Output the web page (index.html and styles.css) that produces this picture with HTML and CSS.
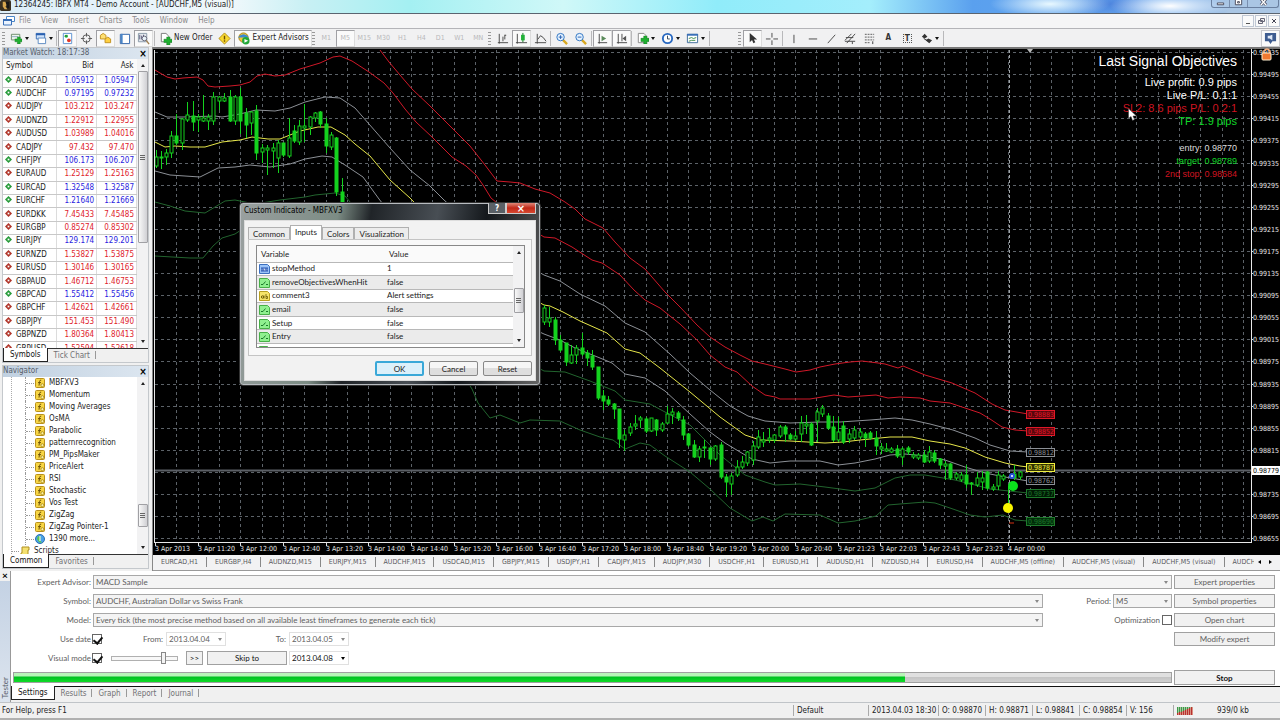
FILE: index.html
```html
<!DOCTYPE html>
<html lang="en">
<head>
    <meta charset="UTF-8">
    <meta name="viewport" content="width=device-width, initial-scale=1.0">
    <title>12364245: IBFX MT4 - Demo Account - [AUDCHF,M5 (visual)]</title>
    <link rel="stylesheet" href="styles.css">
</head>
<body>
    <svg class="defs" aria-hidden="true">
        <symbol id="i-fx" viewBox="0 0 10 10"><rect x=".5" y=".5" width="9" height="9" rx="1" fill="#f7d544" stroke="#b8901c"/><path d="M6.2 2.2Q4.8 1.8 4.6 3.4L4 7.6M3 4.6h3" fill="none" stroke="#6d5208"/><circle cx="7.4" cy="7.2" r="1.5" fill="#fff3a0" stroke="#9c7a10" stroke-width=".7"/></symbol>
        <symbol id="i-bool" viewBox="0 0 11 10"><path d="M.5.5h8l2 2v7H.5z" fill="#8ff08f" stroke="#48b048"/><path d="M2 6.5h2l2.5-3M7 6.5h2" fill="none" stroke="#1c7a2c"/></symbol>
        <symbol id="i-int" viewBox="0 0 11 10"><path d="M.5.5h8l2 2v7H.5z" fill="#9cc4f8" stroke="#3c70c0"/><path d="M2 3.5h7v4H2z" fill="#2454b4"/><path d="M3 4.5v2M5 6.500v-2l1 2v-2M8 4.500v2" stroke="#fff" stroke-width=".6" fill="none"/></symbol>
        <symbol id="i-str" viewBox="0 0 11 10"><path d="M.5.5h8l2 2v7H.5z" fill="#f6e468" stroke="#b8a020"/><circle cx="3.6" cy="6" r="1.200" fill="none" stroke="#6a5800"/><path d="M5 4.500v3M7 3v4.500h1.500v-2H7" fill="none" stroke="#6a5800" stroke-width=".8"/></symbol>
        <symbol id="i-plus" viewBox="0 0 8 8"><path d="M3 0h3v2.500h2v3H6V8H3V5.500H0v-3h3z" fill="#1fb030" stroke="#0c7018" stroke-width=".5"/></symbol>
    </svg>

    <header class="titlebar">
        <svg class="app-icon" viewBox="0 0 12 12"><rect width="12" height="12" rx="2" fill="#3a3020"/><path d="M3 2h3l2 3-2 2 2 3H5L3 7z" fill="#d8a850"/><path d="M6 2h4v7H8z" fill="#181818"/></svg>
        <h1>12364245: IBFX MT4 - Demo Account - [AUDCHF,M5 (visual)]</h1>
        <div class="win-buttons">
            <button aria-label="Minimize"><svg viewBox="0 0 10 10"><path d="M1.500 5.500h7v2h-7z" fill="#fff" stroke="#445"/></svg></button>
            <button aria-label="Restore"><svg viewBox="0 0 10 10"><path d="M1.500 1.500h7v6h-7zM4 4h2v1.500H4z" fill="#fff" stroke="#445"/></svg></button>
            <button aria-label="Close" class="wide"><svg viewBox="0 0 10 10"><path d="M2 1l6 7M8 1L2 8" stroke="#445" stroke-width="3"/><path d="M2 1l6 7M8 1L2 8" stroke="#fff" stroke-width="1.500"/></svg></button>
        </div>
    </header>

    <nav class="menubar">
        <svg class="menu-icon" viewBox="0 0 12 10"><path d="M3.500.5h8v5h-8z" fill="#fff" stroke="#4a86c8"/><path d="M.5 3.500h8v5.500h-8z" fill="#eaf3ff" stroke="#3a70b8"/><path d="M0 4h9" stroke="#3a70b8" stroke-width="2"/></svg>
        <a href="#">File</a><a href="#">View</a><a href="#">Insert</a><a href="#">Charts</a><a href="#">Tools</a><a href="#">Window</a><a href="#">Help</a>
        <div class="mdi-buttons">
            <button aria-label="Minimize chart"><svg viewBox="0 0 10 10"><path d="M3 7.500h4" stroke="#555"/></svg></button>
            <button aria-label="Restore chart"><svg viewBox="0 0 10 10"><path d="M4.500 2.500h4v3h-4zM2.500 4.500h4v3h-4z" fill="#eee" stroke="#667"/></svg></button>
            <button aria-label="Close chart"><svg viewBox="0 0 10 10"><path d="M3 3l4 4M7 3L3 7" stroke="#445"/></svg></button>
        </div>
    </nav>

    <div class="toolbar">
        <i class="grip"></i>
        <button class="tool drop first" aria-label="New chart"><svg viewBox="0 0 14 14"><path d="M1.500 2.500h9v6h-9z" fill="#eef6ee" stroke="#6a8a6a"/><path d="M2 5h7" stroke="#8ab"/><use href="#i-plus" x="5" y="5" width="8" height="8"/></svg></button>
        <button class="tool drop first" aria-label="Profiles"><svg viewBox="0 0 14 14"><path d="M2.500 1.500h9v6h-9z" fill="#cfe2fa" stroke="#3a70b8"/><path d="M4.500 6.500h8v6h-8z" fill="#fff" stroke="#5a88c0"/><path d="M2 2.500h10" stroke="#2a60b0" stroke-width="2"/></svg></button>
        <i class="sep"></i>
        <button class="tool on" aria-label="Market watch"><svg viewBox="0 0 14 14"><path d="M2.500 1.500h9v11h-9z" fill="#fff" stroke="#5a90d0"/><path d="M4 4l3-1v3z" fill="#1a9a30"/><circle cx="5.500" cy="4.500" r="1.600" fill="#20a038"/><circle cx="8.500" cy="9" r="2" fill="#e03828"/></svg></button>
        <button class="tool" aria-label="Data window"><svg viewBox="0 0 14 14"><circle cx="7" cy="7" r="4" fill="none" stroke="#555"/><path d="M7 1v4M7 9v4M1 7h4M9 7h4" stroke="#555"/></svg></button>
        <button class="tool on" aria-label="Navigator"><svg viewBox="0 0 14 14"><path d="M1.500 3.500l3-2 3 2v4h-6z" fill="#ffe070" stroke="#c09020"/><path d="M6.500 7.500l3-2 3 2v4h-6z" fill="#ffd040" stroke="#c09020"/></svg></button>
        <button class="tool" aria-label="Terminal"><svg viewBox="0 0 14 14"><path d="M2.500 2.500h10v10h-10z" fill="#fff" stroke="#2a60a8"/><path d="M4 2v10" stroke="#4a86c8" stroke-width="2"/></svg></button>
        <button class="tool on" aria-label="Strategy tester"><svg viewBox="0 0 14 14"><path d="M1.500 1.500h9v9h-9z" fill="#e4e8ee" stroke="#8898a8"/><path d="M3 3v5M5 4v4M7 3v5" stroke="#557"/><circle cx="8" cy="7" r="2.500" fill="#e8f2fa" stroke="#667"/><path d="M10 9l3 4" stroke="#a08050" stroke-width="1.500"/></svg></button>
        <i class="sep"></i>
        <button class="tool text"><svg viewBox="0 0 14 14"><path d="M2.500 1.500h5l3 3v6h-8z" fill="#fff" stroke="#777"/><use href="#i-plus" x="5" y="5" width="9" height="9"/></svg>New Order</button>
        <button class="tool" aria-label="Metaeditor"><svg viewBox="0 0 14 14"><path d="M7 1l6 6-6 6-6-6z" fill="#f8d830" stroke="#b08a10"/><path d="M7 4v4M7 9v1.500" stroke="#705000" stroke-width="1.500"/></svg></button>
        <button class="tool text on"><svg viewBox="0 0 14 14"><circle cx="7" cy="6" r="5" fill="#f0c838" stroke="#a88010"/><path d="M1 6q6-7 12 0z" fill="#3a88d0"/><circle cx="9.500" cy="9.500" r="4" fill="#22a838"/><path d="M8 7.500l4 2-4 2z" fill="#fff"/></svg>Expert Advisors</button>
        <i class="grip"></i>
        <button class="tool tf" disabled>M1</button><button class="tool tf on" disabled>M5</button><button class="tool tf" disabled>M15</button><button class="tool tf" disabled>M30</button><button class="tool tf" disabled>H1</button><button class="tool tf" disabled>H4</button><button class="tool tf" disabled>D1</button><button class="tool tf" disabled>W1</button><button class="tool tf" disabled>MN</button>
        <i class="grip"></i>
        <button class="tool" aria-label="Bar chart"><svg viewBox="0 0 14 14"><path d="M3.500 2v10.500M2 11.500h11M7.500 5v5M9.500 3v5M9.500 3.500H11" fill="none" stroke="#444"/></svg></button>
        <button class="tool on" aria-label="Candlesticks"><svg viewBox="0 0 14 14"><path d="M2.500 2v10.500M1 11.500h12" stroke="#444"/><path d="M8.500 1v10" stroke="#0a7018"/><path d="M6.500 3h4v6h-4z" fill="#22b038"/></svg></button>
        <button class="tool" aria-label="Line chart"><svg viewBox="0 0 14 14"><path d="M3.500 2v10.500M1 11.500h12M4 8l3-4 3 2 3 4" fill="none" stroke="#444"/></svg></button>
        <i class="sep thin"></i>
        <button class="tool" aria-label="Zoom in"><svg viewBox="0 0 14 14"><path d="M8 8l5 5" stroke="#d8a820" stroke-width="2.500"/><circle cx="6" cy="5.500" r="4" fill="#e4f2ff" stroke="#2a70c0"/><path d="M4 5.500h4M6 3.500v4" stroke="#2a60b0"/></svg></button>
        <button class="tool" aria-label="Zoom out"><svg viewBox="0 0 14 14"><path d="M8 8l5 5" stroke="#d8a820" stroke-width="2.500"/><circle cx="6" cy="5.500" r="4" fill="#e4f2ff" stroke="#2a70c0"/><path d="M4 5.500h4" stroke="#2a60b0"/></svg></button>
        <i class="sep"></i>
        <button class="tool on" aria-label="Auto scroll"><svg viewBox="0 0 14 14"><path d="M3.500 2v10.500M2 11.500h10" stroke="#444"/><path d="M6 4l5 3-5 3z" fill="#5a8a5a"/></svg></button>
        <button class="tool on" aria-label="Chart shift"><svg viewBox="0 0 14 14"><path d="M3.500 2v10.500M2 11.500h11M7.500 2v8" stroke="#444"/><path d="M12 4L8 7l4 3z" fill="#555"/></svg></button>
        <i class="sep thin"></i>
        <button class="tool drop" aria-label="Indicators"><svg viewBox="0 0 14 14"><path d="M2.500 1.500h6l2 2v8h-8z" fill="#fff" stroke="#888"/><use href="#i-plus" x="5" y="4" width="9" height="9"/></svg></button>
        <button class="tool drop" aria-label="Periods"><svg viewBox="0 0 14 14"><circle cx="7" cy="7" r="5" fill="#fff" stroke="#2868c0" stroke-width="2"/><path d="M7 4v3.500h2.500" fill="none" stroke="#345"/></svg></button>
        <button class="tool drop" aria-label="Templates"><svg viewBox="0 0 14 14"><path d="M1.500 2.500h11v9h-11z" fill="#fff" stroke="#3a6898"/><path d="M1 3h12" stroke="#3a70b8" stroke-width="2"/><path d="M3 7l3-1 2 1 3-1M3 10l3-1h4" fill="none" stroke="#3a8a48"/></svg></button>
        <i class="sep"></i>
        <i class="grip far"></i>
        <button class="tool on" aria-label="Cursor"><svg viewBox="0 0 14 14"><path d="M4 1v10l2.500-2.500L8 12l2-1-1.500-3H12z" fill="#333"/></svg></button>
        <button class="tool" aria-label="Crosshair"><svg viewBox="0 0 14 14"><path d="M7.500 1v5M7.500 9v5M1 7.500h5M9 7.500h5" stroke="#444"/></svg></button>
        <i class="sep"></i>
        <button class="tool" aria-label="Vertical line"><svg viewBox="0 0 14 14"><path d="M7.500 3v9" stroke="#444"/></svg></button>
        <button class="tool" aria-label="Horizontal line"><svg viewBox="0 0 14 14"><path d="M3 7.500h9" stroke="#444"/></svg></button>
        <button class="tool" aria-label="Trendline"><svg viewBox="0 0 14 14"><path d="M3 12l8-9" stroke="#444"/></svg></button>
        <button class="tool" aria-label="Equidistant channel"><svg viewBox="0 0 14 14"><path d="M1 9l7-7M3 12l9-10M2 6h8M1 10h8" stroke="#444"/><path d="M9 13v-3h3" fill="none" stroke="#444"/></svg></button>
        <button class="tool" aria-label="Fibonacci"><svg viewBox="0 0 14 14"><path d="M2 2.500h10M2 5.500h10M2 8.500h10M2 11.500h6" stroke="#555" stroke-dasharray="2 1"/><path d="M10.500 10v3" stroke="#333"/></svg></button>
        <button class="tool letter" aria-label="Text">A</button>
        <button class="tool letter" aria-label="Text label"><span class="boxed">T</span></button>
        <button class="tool drop" aria-label="Arrows"><svg viewBox="0 0 14 14"><path d="M2 5l3-3 3 3-3 2zM6 9l3-2 4 2-3 3z" fill="#333"/><path d="M4 7l5 3" stroke="#333"/></svg></button>
        <i class="sep"></i>
        <button class="tool chat" aria-label="Community"><svg viewBox="0 0 14 14"><path d="M1 1h12v9H9l-2 3-2-3H1z" fill="#3e5c90"/><path d="M4 4v3h2l3 2V3L6 4z" fill="#dfe8f6"/></svg></button>
    </div>

    <main class="workspace">
        <aside class="side">
            <section class="panel market">
                <h2>Market Watch: 18:17:38<button aria-label="Close">×</button></h2>
                <div class="scroll-area">
                    <table>
                        <thead><tr><th>Symbol</th><th>Bid</th><th>Ask</th></tr></thead>
                        <tbody id="quotes"></tbody>
                    </table>
                    <div class="bar"><i class="up"></i><b class="thumb"></b><i class="down"></i></div>
                </div>
                <div class="tabs"><button class="active">Symbols</button><button>Tick Chart</button></div>
            </section>
            <section class="panel navigator">
                <h2>Navigator<button aria-label="Close">×</button></h2>
                <div class="scroll-area">
                    <ul id="indicators">
                        <li>MBFXV3</li>
                        <li>Momentum</li>
                        <li>Moving Averages</li>
                        <li>OsMA</li>
                        <li>Parabolic</li>
                        <li>patternrecognition</li>
                        <li>PM_PipsMaker</li>
                        <li>PriceAlert</li>
                        <li>RSI</li>
                        <li>Stochastic</li>
                        <li>Vos Test</li>
                        <li>ZigZag</li>
                        <li>ZigZag Pointer-1</li>
                        <li class="more">1390 more...</li>
                        <li class="folder">Scripts</li>
                    </ul>
                    <div class="bar low"><i class="up"></i><b class="thumb"></b><i class="down"></i></div>
                </div>
                <div class="tabs"><button class="active">Common</button><button>Favorites</button></div>
            </section>
        </aside>

        <section class="chart-col">
            <div class="chart">
                <svg id="chart" viewBox="153 47 1127 508" role="img" aria-label="AUDCHF M5 chart">
                    <rect x="153" y="47" width="1127" height="508" fill="#000"/>
                    <path d="M153 48h1127" stroke="#777" stroke-width="2"/>
                    <g id="grid"></g>
                    <path d="M154 470.500h1097" stroke="#5c6066" stroke-width="2"/>
                    <g fill="none" stroke-width="1">
                        <g stroke="#d01828">
                            <polyline points="155,70 160,73 167,77 175,79 183,78 197,77 203,80 208,86 215,87 230,86 240,85 250,82 257,76 265,74 275,76 285,75 300,69 320,63 333,57 340,56 352,61 369,72 384,83 393,93 405,109 416,122 432,137 452,157 466,166 476,175 483,185 491,198 520,222 544,237 555,238 572,247 592,260 602,263 620,275 634,290 645,300 660,308 680,324 697,340 710,355 725,367 737,372 752,386 765,395 775,397 780,399 810,399 834,395 848,397 876,395 888,398 900,397 920,398 930,401 950,403 965,408 980,413 990,419 1002,427 1015,430 1028,431"/>
                            <polyline points="380,50 389,62 400,75 412,89 430,106 450,126 470,146 485,165 497,181 510,182 520,183 535,189 550,193 565,202 575,209 585,219 603,228 615,242 630,258 645,269 665,292 680,307 697,325 710,337 725,347 740,355 752,361 765,364 785,369 796,372 810,370 820,367 835,364 850,362 862,361 878,363 885,364 898,368 903,366 925,375 952,383 975,393 992,404 1005,410 1028,414"/>
                        </g>
                        <g stroke="#8c9096">
                            <polyline points="155,112 167,117 183,117 215,116 222,117 240,114 256,110 275,111 290,108 305,102 325,97 340,98 355,108 369,124 390,148 410,170 430,186 444,200 500,250 544,275 560,281 580,294 605,306 625,323 645,332 670,354 690,373 710,390 730,406 748,416 765,421 790,423 820,422 840,422 870,420 895,418 912,420 930,424 953,430 975,438 990,445 1010,451 1028,452"/>
                            <polyline points="155,171 170,175 200,177 218,168 235,167 250,165 270,167 290,164 305,159 322,156 332,157 345,165 363,177 379,199 450,290 544,334 560,340 575,348 600,358 612,363 625,374 645,378 665,391 690,414 710,432 725,443 740,452 752,459 770,463 790,461 820,461 838,465 855,463 875,459 890,455 905,454 925,456 945,460 965,467 985,473 1005,477 1028,481"/>
                        </g>
                        <polyline stroke="#e6e64a" points="155,142 165,147 175,146 190,147 205,147 222,142 240,140 252,137 268,139 280,139 300,131 318,127 331,127 345,135 355,144 370,156 390,180 410,198 480,270 544,305 550,306 563,312 580,321 607,333 625,349 640,353 660,368 690,392 720,417 745,435 760,440 790,441 825,443 843,442 860,440 880,438 890,437 912,437 930,441 950,444 965,448 985,457 1005,463 1020,466 1028,467"/>
                        <g stroke="#22642e">
                            <polyline points="155,202 170,206 185,211 205,213 225,201 235,200 255,204 280,200 305,197 315,195 335,193 345,196 450,320 544,371 565,372 590,381 615,391 625,400 650,404 665,412 690,425 720,455 745,475 765,482 775,485 800,484 825,487 855,491 875,488 895,478 910,475 925,475 955,480 975,485 990,489 1028,493"/>
                            <polyline points="155,256 190,258 203,258 213,246 222,238 235,234 241,230 340,260 440,340 472,389 478,403 490,418 500,415 520,423 530,420 560,421 580,430 600,437 613,440 625,449 640,443 650,445 665,456 690,472 710,489 730,508 752,521 763,517 773,521 785,514 820,515 838,523 855,521 876,516 888,505 900,504 925,502 935,503 950,508 970,515 985,517 1003,515 1015,520 1028,521"/>
                        </g>
                    </g>
                    <g id="candles" stroke="#14d21e"></g>
                    <path d="M1009.500 50v492" stroke="#a0a4a8" stroke-dasharray="3 2"/>
                    <g id="levels"></g>
                    <path d="M1008.500 486v22" stroke="#14d21e"/>
                    <circle cx="1012" cy="476" r="2" fill="#fff" stroke="#2a50d8" stroke-width="2"/>
                    <circle cx="1013" cy="486" r="5" fill="#0be41c"/>
                    <circle cx="1008" cy="508" r="5" fill="#f8f400"/>
                    <path d="M1009 523h5" stroke="#d03010"/>
                    <path d="M154.500 50v492M154 542.500h1097.500M1251.500 49v494" fill="none" stroke="#e8e8e8"/>
                    <path d="M1027 49h6l-3 4z" fill="#bbb"/>
                    <g id="axes" class="axis"></g>
                    <path d="M1264 53v-2q3-4 6 0v2" fill="none" stroke="#f8b080" stroke-width="1.500"/>
                    <rect x="1262" y="53" width="9" height="7" rx="1" fill="#f07830" stroke="#fff0d0"/>
                </svg>
                <div class="signal">
                    <strong>Last Signal Objectives</strong>
                    <p>Live profit: 0.9 pips</p>
                    <p>Live P/L: 0.1:1</p>
                    <p class="stop">SL2: 8.6 pips P/L: 0.2:1</p>
                    <p class="target">TP: 1.9 pips</p>
                    <small>entry: 0.98770</small>
                    <small class="target">target: 0.98789</small>
                    <small class="stop">2nd stop: 0.98684</small>
                </div>
                <svg class="pointer" viewBox="0 0 9 13"><path d="M.5.5v10l2.500-2 1.500 4 2-1-1.500-3.500h3.500z" fill="#fff" stroke="#333" stroke-width=".5"/></svg>
            </div>
            <div class="chart-tabs">
                <div class="strip">
                    <button>EURCAD,H1</button><button>EURGBP,H4</button><button>AUDNZD,M15</button><button>EURJPY,M15</button><button>AUDCHF,M15</button><button>USDCAD,M15</button><button>GBPJPY,M15</button><button>USDJPY,H1</button><button>CADJPY,M15</button><button>AUDJPY,M30</button><button>USDCHF,H1</button><button>EURUSD,H1</button><button>AUDUSD,H1</button><button>NZDUSD,H4</button><button>EURUSD,H4</button><button>AUDCHF,M5 (offline)</button><button>AUDCHF,M5 (visual)</button><button>AUDCHF,M5 (visual)</button><button>AUDCHF</button>
                </div>
                <button class="arrow" aria-label="Scroll left"><i class="left"></i></button>
                <button class="arrow" aria-label="Scroll right"><i class="right"></i></button>
            </div>
        </section>
    </main>

    <section class="tester">
        <div class="tester-side"><button aria-label="Close tester">×</button><span>Tester</span></div>
        <div class="tester-main">
            <div class="form">
                <div class="line">
                    <label class="name" for="expert">Expert Advisor:</label>
                    <span class="combo grow"><select id="expert" disabled><option>MACD Sample</option></select></span>
                    <button class="side-btn dim">Expert properties</button>
                </div>
                <div class="line">
                    <label class="name" for="symbol">Symbol:</label>
                    <span class="combo grow"><select id="symbol" disabled><option>AUDCHF, Australian Dollar vs Swiss Frank</option></select></span>
                    <span class="extra"><label for="period">Period:</label><span class="combo period"><select id="period" disabled><option>M5</option></select></span></span>
                    <button class="side-btn dim">Symbol properties</button>
                </div>
                <div class="line">
                    <label class="name" for="model">Model:</label>
                    <span class="combo grow"><select id="model" disabled><option>Every tick (the most precise method based on all available least timeframes to generate each tick)</option></select></span>
                    <span class="extra"><label for="opt">Optimization</label><input type="checkbox" id="opt" disabled></span>
                    <button class="side-btn dim">Open chart</button>
                </div>
                <div class="line">
                    <label class="name" for="usedate">Use date</label>
                    <input type="checkbox" id="usedate" checked>
                    <label class="date-name from" for="from">From:</label>
                    <span class="combo date"><select id="from" disabled><option>2013.04.04</option></select></span>
                    <label class="date-name" for="to">To:</label>
                    <span class="combo date"><select id="to" disabled><option>2013.04.05</option></select></span>
                    <button class="side-btn dim last">Modify expert</button>
                </div>
                <div class="line">
                    <label class="name" for="visual">Visual mode</label>
                    <input type="checkbox" id="visual" checked>
                    <input type="range" class="speed" aria-label="Speed" min="0" max="32" value="26">
                    <button class="small-btn">&gt;&gt;</button>
                    <button class="skip-btn">Skip to</button>
                    <span class="combo date live"><select aria-label="Skip to date"><option>2013.04.08</option></select></span>
                </div>
            </div>
            <div class="run">
                <div class="progress" role="progressbar" aria-label="Test progress" aria-valuenow="77"><div style="width: 77%"></div></div>
                <button class="side-btn stop-btn">Stop</button>
            </div>
            <div class="tabs"><button class="active">Settings</button><button>Results</button><button>Graph</button><button>Report</button><button>Journal</button></div>
        </div>
    </section>

    <footer class="statusbar">
        <span class="help">For Help, press F1</span>
        <span class="cell wide">Default</span>
        <span class="cell mid">2013.04.03 18:30</span>
        <span class="cell">O: 0.98870</span>
        <span class="cell">H: 0.98871</span>
        <span class="cell">L: 0.98841</span>
        <span class="cell">C: 0.98854</span>
        <span class="cell">V: 156</span>
        <span class="cell traffic"><svg viewBox="0 0 17 9"><path d="M0 1h16v8H0z" fill="#a8c8a0"/><path d="M0 9V7l16-6v8z" fill="#d89080"/><path d="M.5 1v8M2.500 1v8M4.500 1v8M6.500 1v8M8.500 1v8M10.500 1v8M12.500 1v8M14.500 1v8" stroke="#3a9a48"/><path d="M.5 7v2M2.500 6v3M4.500 6v3M6.500 5v4M8.500 4v5M10.500 3v6M12.500 2v7M14.500 1v8" stroke="#b83030"/></svg>939/0 kb</span>
    </footer>

    <div class="dialog" role="dialog" aria-label="Custom Indicator - MBFXV3">
        <div class="dialog-title">Custom Indicator - MBFXV3
            <div class="dialog-buttons"><button aria-label="Help">?</button><button class="close" aria-label="Close">×</button></div>
        </div>
        <div class="dialog-body">
            <div class="dialog-tabs"><button>Common</button><button class="active">Inputs</button><button>Colors</button><button>Visualization</button></div>
            <div class="page">
                <div class="inputs">
                    <div class="rows">
                        <table>
                            <thead><tr><th>Variable</th><th>Value</th></tr></thead>
                            <tbody>
                                <tr><td><svg><use href="#i-int"/></svg>stopMethod</td><td>1</td></tr>
                                <tr><td><svg><use href="#i-bool"/></svg>removeObjectivesWhenHit</td><td>false</td></tr>
                                <tr><td><svg><use href="#i-str"/></svg>comment3</td><td>Alert settings</td></tr>
                                <tr><td><svg><use href="#i-bool"/></svg>email</td><td>false</td></tr>
                                <tr><td><svg><use href="#i-bool"/></svg>Setup</td><td>false</td></tr>
                                <tr><td><svg><use href="#i-bool"/></svg>Entry</td><td>false</td></tr>
                                <tr><td><svg><use href="#i-bool"/></svg>stopHit</td><td>false</td></tr>
                            </tbody>
                        </table>
                    </div>
                    <div class="bar mid"><i class="up"></i><b class="thumb"></b><i class="down"></i></div>
                </div>
            </div>
            <div class="actions"><button class="default">OK</button><button>Cancel</button><button>Reset</button></div>
        </div>
    </div>

    <script>
        // symbol, bid, ask, direction
        const quotes = [
            ['AUDCAD', '1.05912', '1.05947', 'up'], ['AUDCHF', '0.97195', '0.97232', 'up'],
            ['AUDJPY', '103.212', '103.247', 'dn'], ['AUDNZD', '1.22912', '1.22955', 'dn'],
            ['AUDUSD', '1.03989', '1.04016', 'dn'], ['CADJPY', '97.432', '97.470', 'dn'],
            ['CHFJPY', '106.173', '106.207', 'up'], ['EURAUD', '1.25129', '1.25163', 'dn'],
            ['EURCAD', '1.32548', '1.32587', 'up'], ['EURCHF', '1.21640', '1.21669', 'up'],
            ['EURDKK', '7.45433', '7.45485', 'dn'], ['EURGBP', '0.85274', '0.85302', 'dn'],
            ['EURJPY', '129.174', '129.201', 'up'], ['EURNZD', '1.53827', '1.53875', 'dn'],
            ['EURUSD', '1.30146', '1.30165', 'dn'], ['GBPAUD', '1.46712', '1.46753', 'dn'],
            ['GBPCAD', '1.55412', '1.55456', 'up'], ['GBPCHF', '1.42621', '1.42661', 'dn'],
            ['GBPJPY', '151.453', '151.490', 'dn'], ['GBPNZD', '1.80364', '1.80413', 'dn'],
            ['GBPUSD', '1.52594', '1.52618', 'dn']
        ];
        document.getElementById('quotes').innerHTML = quotes.map(([s, bid, ask, dir]) => `
            <tr class="${dir}"><td><svg viewBox="0 0 8 8"><path d="M4 0l4 4-4 4-4-4z"/><path class="dot" d="M3 3h2v2H3z"/></svg>${s}</td><td>${bid}</td><td>${ask}</td></tr>`).join('');

        // Icons in the navigator tree
        document.querySelectorAll('#indicators li').forEach(li => {
            let icon = '<use href="#i-fx"/>';
            if (li.className === 'more') icon = '<circle cx="5" cy="5" r="4.5" fill="#4aa0e8" stroke="#2a70b0"/><path d="M3 2l3 1-1 3 2 3-3-1-2-3z" fill="#5cc850"/><path d="M5 2v5" stroke="#fff"/>';
            if (li.className === 'folder') icon = '<path d="M2 1h7v3H8v5H1V7h1z" fill="#f4e070" stroke="#b09020"/>';
            li.insertAdjacentHTML('afterbegin', `<svg viewBox="0 0 10 10">${icon}</svg>`);
        });

        // Grid lines and axis labels
        const stepX = 21.33, stepY = 22.1;
        let grid = '', axes = '';
        for (let i = 1; i < 52; i++) {
            const x = Math.round(155 + i * stepX) + 0.5;
            if (x < 1250) grid += `<path d="M${x} 50V542"/>`;
        }
        for (let i = 0; i < 23; i++) {
            const y = Math.round(52 + i * stepY);
            grid += `<path d="M155 ${y + 0.5}H1251"/>`;
            if (i !== 19) axes += `<text x="1253" y="${y + 3}">${(0.99535 - i * 0.0004).toFixed(5)}</text>`;
            axes += `<path d="M1251 ${y + 0.5}h2" stroke="#ddd"/>`;
        }
        axes += '<rect x="1252" y="466" width="28" height="9" fill="#fff"/><text x="1253" y="473" class="now">0.98779</text>';
        const times = ['3 Apr 2013', '3 Apr 11:20', '3 Apr 12:00', '3 Apr 12:40', '3 Apr 13:20', '3 Apr 14:00', '3 Apr 14:40',
            '3 Apr 15:20', '3 Apr 16:00', '3 Apr 16:40', '3 Apr 17:20', '3 Apr 18:00', '3 Apr 18:40', '3 Apr 19:20',
            '3 Apr 20:00', '3 Apr 20:40', '3 Apr 21:23', '3 Apr 22:03', '3 Apr 22:43', '3 Apr 23:23', '4 Apr 00:00'];
        times.forEach((t, i) => {
            const x = Math.round(155 + i * stepX * 2);
            axes += `<path d="M${x + 0.5} 543v3" stroke="#ddd"/><text x="${x}" y="551">${t}</text>`;
        });
        document.getElementById('grid').innerHTML = grid;
        document.getElementById('axes').innerHTML = axes;

        // Candles: x, high, body top, body bottom, low, 1 = filled
        const candles = [
            [156,150,157,166,168,0],[161,151,157,158,169,0],[166,149,153,157,165,0],[171,131,136,153,158,0],[176,114,136,143,145,1],
            [182,118,119,143,150,0],[187,102,115,120,122,0],[193,101,116,122,131,1],[198,114,117,120,132,0],[203,95,118,121,122,0],
            [208,114,117,121,130,0],[213,92,97,121,125,0],[219,96,97,101,110,0],[224,93,98,101,102,0],[230,90,97,121,122,1],
            [235,95,97,121,125,0],[240,88,97,121,134,1],[246,108,113,125,138,1],[251,111,112,123,135,0],[256,105,111,153,160,1],
            [262,144,148,152,163,0],[267,145,148,150,175,0],[273,143,148,151,168,0],[278,140,143,158,173,0],[283,143,143,155,157,1],
            [289,118,138,156,158,0],[294,125,131,141,143,1],[299,120,126,142,145,0],[304,104,126,128,142,0],[310,116,117,127,135,0],
            [315,112,113,118,122,0],[320,111,112,124,128,1],[326,118,124,146,153,1],[331,132,135,147,150,0],[336,137,138,192,196,1],
            [342,178,192,204,206,1],
            [544,305,308,322,325,0],[549,307,318,322,327,0],[555,317,320,340,345,1],[560,335,340,350,352,1],[566,343,343,362,366,1],
            [571,345,355,363,364,0],[576,345,348,355,364,0],[582,333,348,354,356,1],[587,350,353,358,366,1],[592,350,356,367,370,1],
            [598,367,367,398,400,1],[603,390,396,401,410,1],[608,396,400,404,406,1],[614,403,404,409,419,1],[619,409,409,439,448,1],
            [624,430,435,440,451,0],[630,423,427,433,436,0],[635,415,424,426,430,0],[640,416,418,420,428,0],[646,417,419,431,433,1],
            [651,418,418,431,432,0],[656,419,420,430,436,1],[662,422,424,430,432,0],[667,406,414,423,424,0],[672,408,412,415,424,0],
            [678,411,413,418,421,1],[683,416,420,435,440,1],[688,433,434,445,447,1],[694,440,445,457,458,1],[699,446,449,457,462,0],
            [704,440,447,448,458,0],[710,447,448,459,465,1],[715,445,446,459,461,0],[721,442,445,477,479,1],[726,474,477,482,497,1],
            [731,473,476,484,495,0],[737,460,467,475,477,0],[742,456,462,467,469,0],[747,451,452,463,466,0],[753,441,446,460,465,0],
            [758,430,437,447,449,0],[763,432,440,442,447,0],[769,428,438,440,443,0],[774,434,435,440,443,0],[780,425,427,436,438,0],
            [785,425,427,434,442,1],[790,433,435,439,440,1],[795,431,436,439,441,0],[801,416,423,434,442,0],[806,415,424,426,434,0],
            [811,422,424,445,446,1],[817,408,412,421,442,0],[822,405,408,414,417,0],[828,413,416,428,430,1],[833,416,427,440,442,1],
            [838,417,432,440,442,0],[843,421,426,442,444,1],[849,429,434,439,443,0],[854,426,430,438,440,0],[860,428,432,437,439,0],
            [865,432,434,438,447,1],[870,431,433,438,440,1],[876,431,438,446,455,1],[881,443,447,449,454,0],[886,443,449,451,452,0],
            [891,447,449,452,453,0],[897,445,449,456,458,1],[902,447,449,457,465,0],[908,446,448,452,455,1],[913,452,455,457,459,0],
            [918,453,455,458,460,0],[924,450,455,462,463,1],[929,446,452,461,463,0],[934,450,453,461,463,1],[940,458,459,465,469,1],
            [945,461,464,466,480,0],[950,463,464,478,480,1],[956,472,474,478,480,0],[961,472,475,480,482,0],[966,465,475,484,488,1],
            [971,482,483,484,495,0],[977,472,478,485,487,0],[982,471,478,482,490,0],[987,471,472,488,490,1],[993,484,487,489,491,0],
            [998,471,475,486,490,0],[1003,474,476,479,481,0],[1014,465,474,478,480,1],[1020,471,472,477,480,0]
        ];
        document.getElementById('candles').innerHTML = candles.map(([x, hi, top, bot, lo, filled]) =>
            `<path d="M${x + 0.5} ${hi}V${lo}"/><rect x="${x - 1}" y="${top}" width="3" height="${bot - top}" fill="${filled ? '#14d21e' : '#000'}"/>`).join('');

        // Band levels at the right end of the lines
        const levels = [
            [414, '0.98883', '#e01828', '#58060c'], [431, '0.98852', '#e01828', '#58060c'], [452, '0.98812', '#8c9096', '#000'],
            [467, '0.98787', '#f0f040', '#303000'], [480, '0.98762', '#8c9096', '#000'], [493, '0.98737', '#1e7a2c', '#001a04'],
            [521, '0.98690', '#1e7a2c', '#002c08']
        ];
        document.getElementById('levels').innerHTML = levels.map(([y, text, color, back]) =>
            `<rect x="1026.5" y="${y - 3.5}" width="28" height="8" fill="${back}" stroke="${color}"/><text x="1028" y="${y + 3}" class="level" fill="${color}">${text}</text>`).join('');
    </script>
</body>
</html>
```
FILE: styles.css
```css
* {
    box-sizing: border-box;
}
body {
    margin: 0;
    min-height: 100vh;
    display: flex;
    flex-direction: column;
    background: #f0f0f0;
    color: #1c1c1c;
    font-family: "DejaVu Sans Condensed", "Noto Sans", sans-serif;
    font-size: 8px;
    line-height: 12px;
    overflow: hidden;
}
button, select, input {
    margin: 0;
    padding: 0;
    border: 0;
    background: none;
    color: inherit;
    font: inherit;
}
h1, h2, p, ul {
    margin: 0;
    padding: 0;
    font-size: inherit;
    font-weight: normal;
}
a {
    color: inherit;
    text-decoration: none;
}
svg {
    display: block;
    flex: none;
}
.defs {
    position: absolute;
    width: 0;
    height: 0;
}

/* Title bar */
.titlebar {
    height: 14px;
    display: flex;
    align-items: flex-start;
    background:
        radial-gradient(ellipse 60px 14px at 1050px 4px, #e8f8ff, transparent),
        radial-gradient(ellipse 60px 14px at 1170px 6px, #ffffff, transparent),
        radial-gradient(ellipse 50px 14px at 1110px 4px, #4f86de, transparent),
        linear-gradient(90deg, #dceef8 0, #f0f8fb 18%, #c8f0f4 24%, #a4f0f2 32%, #d0f8f8 44%, #90ecfa 56%, #a4eefc 68%, #5aa0ee 76%, #6aa8ee 92%, #aac6e4 96%);
    border-bottom: 1px solid #5a6470;
}
.app-icon {
    width: 11px;
    height: 11px;
}
.titlebar h1 {
    margin-left: 3px;
    line-height: 10px;
    white-space: nowrap;
}
.win-buttons {
    margin-left: auto;
    margin-right: 1px;
    display: flex;
    border: 1px solid #6a80a0;
    border-top: 0;
    border-radius: 0 0 3px 3px;
}
.win-buttons button {
    width: 18px;
    height: 7px;
    border-right: 1px solid #7a90b0;
    overflow: hidden;
}
.win-buttons .wide {
    width: 30px;
    border: 0;
}
.win-buttons svg {
    width: 9px;
    height: 9px;
    margin: -2px auto 0;
}

/* Menu */
.menubar {
    height: 15px;
    display: flex;
    align-items: center;
    background: #f5f5f6;
    border-bottom: 1px solid #b4b4b8;
    color: #8a8a8c;
}
.menu-icon {
    width: 12px;
    height: 10px;
    margin: 0 4px 0 3px;
}
.menubar a {
    margin-right: 10px;
}
.mdi-buttons {
    margin-left: auto;
    display: flex;
}
.mdi-buttons button {
    width: 12px;
    height: 12px;
    margin-left: 1px;
    border: 1px solid #c0c8d4;
    background: #fafafa;
}
.mdi-buttons svg {
    width: 10px;
    height: 10px;
}

/* Toolbar */
.toolbar {
    height: 18px;
    display: flex;
    align-items: center;
    padding-left: 2px;
    background: #f1f1f2;
}
.grip {
    flex: none;
    width: 3px;
    height: 13px;
    margin-right: 2px;
    background: repeating-linear-gradient(#999 0 1px, transparent 1px 3px);
}
.grip.far {
    margin-left: 27px;
}
.sep {
    flex: none;
    width: 1px;
    height: 15px;
    margin: 0 1px;
    background: #b8b8ba;
}
.sep.thin {
    margin: 0 1px 0 0;
}
.tool {
    flex: none;
    position: relative;
    width: 19px;
    height: 17px;
    display: flex;
    align-items: center;
    justify-content: center;
    border: 1px solid transparent;
}
.tool svg {
    width: 13px;
    height: 13px;
}
.tool.drop {
    width: 25px;
    justify-content: flex-start;
    padding-left: 2px;
}
.tool.first {
    width: 24px;
}
.tool.drop::after, .combo::after {
    content: "";
    border: 2px solid transparent;
    border-top: 3px solid #111;
    border-bottom: 0;
}
.tool.drop::after {
    margin-left: 2px;
}
.tool.on {
    background: #fafafa;
    border-color: #a0a0a4 #dcdcdc #dcdcdc #a0a0a4;
}
.tool.text {
    width: auto;
    gap: 2px;
    padding: 0 2px;
}
.tool.tf {
    color: #b8b8ba;
    font-size: 7px;
}
.letter {
    color: #333;
    font-weight: bold;
}
.boxed {
    border: 1px dotted #555;
    line-height: 7px;
    padding: 0 1px;
}
.tool.chat {
    margin-left: auto;
    background: #fafafa;
    border-color: #c8c8cc;
}

/* Side panels */
.workspace {
    display: flex;
    height: 524px;
}
.side {
    flex: none;
    width: 153px;
    display: flex;
    flex-direction: column;
    padding: 0 3px 0 2px;
    border-right: 1px solid #888;
}
.panel {
    display: flex;
    flex-direction: column;
    border: 1px solid #c4c8cc;
}
.market {
    height: 316px;
    margin-bottom: 2px;
}
.navigator {
    height: 204px;
}
.panel h2 {
    flex: none;
    height: 11px;
    line-height: 10px;
    display: flex;
    justify-content: space-between;
    background: linear-gradient(90deg, #c0d0e0, #dce6f0);
    color: #58606a;
}
.panel h2 button {
    width: 10px;
    color: #000;
    font-size: 10px;
    font-weight: bold;
    line-height: 10px;
}
.scroll-area {
    flex: 1;
    min-height: 0;
    display: flex;
    overflow: hidden;
    background: #fff;
    border-bottom: 1px solid #333;
}
.market table {
    flex: 1;
    height: 297px;
    border-collapse: collapse;
}
.market th {
    height: 15px;
    padding: 0 3px;
    font-weight: normal;
    text-align: right;
    background: #fafafa;
    border-bottom: 1px solid #c8c8c8;
}
.market th:first-child {
    text-align: left;
}
.market td {
    padding: 0 2px;
    line-height: 10px;
    text-align: right;
    border-bottom: 1px solid #c8c8c8;
    border-right: 1px solid #dcdcdc;
}
.market td:first-child {
    text-align: left;
}
.market td svg {
    display: inline-block;
    width: 7px;
    height: 7px;
    margin-right: 4px;
}
.up td + td {
    color: #2a1ce0;
}
.dn td + td {
    color: #e0222c;
}
.up td path {
    fill: #259a38;
}
.dn td path {
    fill: #b03428;
}
.market td .dot {
    fill: #fff;
}
.bar {
    flex: none;
    width: 11px;
    margin-left: auto;
    display: flex;
    flex-direction: column;
    align-items: center;
    background: #f2f2f3;
    padding: 5px 0;
}
.bar i {
    border: 2px solid transparent;
}
.bar .up {
    border-bottom: 3px solid #222;
    border-top: 0;
}
.bar .down {
    border-top: 3px solid #222;
    border-bottom: 0;
    margin-top: auto;
}
.thumb {
    width: 10px;
    height: 172px;
    margin-top: 4px;
    border: 1px solid #a0a0a4;
    border-radius: 1px;
    background: repeating-linear-gradient(#666 0 1px, transparent 1px 2px) center / 5px 5px no-repeat, linear-gradient(90deg, #f8f8f8, #d0d0d4);
}
.bar.low .thumb {
    height: 23px;
    margin-top: 119px;
}
.bar.mid .thumb {
    height: 25px;
    margin-top: 34px;
}
.tabs {
    flex: none;
    height: 13px;
    display: flex;
    align-items: flex-start;
    background: #f0f0f0;
    color: #707074;
}
.tabs button {
    position: relative;
    height: 13px;
    padding: 0 6px;
}
.tabs button::after {
    content: "";
    position: absolute;
    right: 0;
    top: 2px;
    height: 8px;
    border-right: 1px solid #999;
}
.tabs .active {
    height: 14px;
    margin-top: -1px;
    background: #fff;
    border: 1px solid #222;
    border-top: 0;
    color: #111;
}
.tabs .active::after {
    display: none;
}
.navigator ul {
    flex: 1;
    list-style: none;
    background: repeating-linear-gradient(#aaa 0 1px, transparent 1px 2px) 8px 0 / 1px 100% no-repeat;
}
.navigator li {
    display: flex;
    align-items: center;
    height: 12px;
    margin-left: 22px;
    white-space: nowrap;
    border-left: 1px dotted #999;
}
.navigator li::before {
    content: "";
    width: 8px;
    border-top: 1px dotted #999;
    margin-right: 1px;
}
.navigator li svg {
    width: 10px;
    height: 10px;
    margin-right: 4px;
}
.navigator .folder {
    margin-left: 8px;
    border: 0;
}

/* Chart */
.chart-col {
    flex: 1;
    min-width: 0;
    display: flex;
    flex-direction: column;
}
.chart {
    position: relative;
    background: #000;
}
#chart {
    width: 100%;
    height: auto;
}
#grid {
    stroke: #5c6268;
    stroke-dasharray: 3 3;
    fill: none;
}
.axis text {
    fill: #e8e8e8;
    font-size: 7px;
}
.axis .now {
    fill: #000;
}
.level {
    font-size: 7px;
}
.signal {
    position: absolute;
    top: 6px;
    right: 43px;
    color: #fff;
    font-family: "Liberation Sans", Arial, sans-serif;
    font-size: 11px;
    line-height: 13px;
    text-align: right;
}
.signal strong {
    display: block;
    margin-bottom: 7px;
    font-size: 14px;
    font-weight: normal;
    line-height: 16px;
}
.signal small {
    display: block;
    font-size: 9px;
}
.signal p + small {
    margin-top: 14px;
    color: #ddd;
}
.signal .stop {
    color: #d01420;
}
.signal .target {
    color: #10d828;
}
.pointer {
    position: absolute;
    left: 975px;
    top: 61px;
    width: 9px;
    height: 13px;
}
.chart-tabs {
    flex: 1;
    display: flex;
    align-items: center;
    padding: 0 4px 2px 0;
    border-bottom: 1px solid #999;
    background: #f2f2f3;
    color: #58585c;
    font-size: 7px;
}
.strip {
    flex: 1;
    min-width: 0;
    display: flex;
    overflow: hidden;
}
.strip button {
    flex: none;
    height: 10px;
    line-height: 10px;
    padding: 0 8px;
    border-right: 1px solid #888;
}
.strip button:last-child {
    border: 0;
}
.arrow {
    width: 11px;
    display: flex;
    justify-content: center;
}
.arrow i {
    border: 2px solid transparent;
}
.arrow .left {
    border-right: 3px solid #000;
    border-left: 0;
}
.arrow .right {
    border-left: 3px solid #000;
    border-right: 0;
}

/* Strategy tester */
.tester {
    display: flex;
    height: 132px;
    border-bottom: 1px solid #c0c4c8;
    font-family: Lato, Arial, sans-serif;
}
.tester-side {
    flex: none;
    width: 11px;
    display: flex;
    flex-direction: column;
    justify-content: space-between;
    align-items: center;
    padding: 0 0 4px;
    background: linear-gradient(#f0f0f0 10px, #c4d2e4 10px, #dce4ee);
    color: #58606a;
    border-right: 1px solid #999;
}
.tester-side button {
    font-size: 10px;
    font-weight: bold;
    line-height: 9px;
    color: #000;
}
.tester-side span {
    writing-mode: vertical-rl;
    transform: rotate(180deg);
}
.tester-main {
    flex: 1;
    min-width: 0;
    display: flex;
    flex-direction: column;
    background: #fff;
}
.tester .tabs {
    flex: 1;
    border-top: 1px solid #111;
    background: #f0f0f0;
    font-family: "DejaVu Sans Condensed", "Noto Sans", sans-serif;
}
.form {
    display: flex;
    flex-direction: column;
    gap: 5px;
    padding: 4px 5px 0 0;
    color: #606060;
}
.line {
    display: flex;
    align-items: center;
    height: 14px;
}
.name {
    flex: none;
    width: 80px;
    margin-right: 2px;
    text-align: right;
}
.combo {
    position: relative;
    display: flex;
    height: 14px;
    border: 1px solid #a8a8a8;
    background: #f4f4f4;
}
.combo.grow {
    flex: 1;
}
.combo select {
    flex: 1;
    width: 100%;
    padding-left: 2px;
    appearance: none;
    color: #606060;
    opacity: 1;
}
.combo::after {
    position: absolute;
    right: 3px;
    top: 5px;
    border-top-color: #888;
}
.combo.period {
    width: 59px;
}
.combo.date {
    width: 60px;
    border-color: #e0e0e0;
    background: #fff;
}
.combo.live select {
    color: #111;
}
.combo.live::after {
    border-top-color: #000;
}
.extra {
    flex: none;
    width: 129px;
    display: flex;
    align-items: center;
    justify-content: flex-end;
    gap: 2px;
}
.date-name {
    width: 63px;
    padding-right: 3px;
    text-align: right;
}
.date-name.from {
    width: 64px;
}
input[type="checkbox"] {
    flex: none;
    appearance: none;
    width: 10px;
    height: 10px;
    border: 1px solid #666;
    background: #fff;
}
.name + input[type="checkbox"] {
    margin-left: -1px;
}
input[type="checkbox"]:checked::before {
    content: "";
    display: block;
    width: 4px;
    height: 7px;
    margin-left: 2px;
    border: solid #111;
    border-width: 0 2px 2px 0;
    transform: rotate(40deg);
}
.speed {
    appearance: none;
    width: 67px;
    height: 5px;
    margin: 0 8px 0 9px;
    border: 1px solid #b0b0b0;
    background: #f8f8f8;
}
.speed::-webkit-slider-thumb {
    appearance: none;
    width: 5px;
    height: 12px;
    border: 1px solid #888;
    background: #f4f4f4;
}
.small-btn, .skip-btn, .side-btn {
    flex: none;
    height: 14px;
    border: 1px solid #a0a0a0;
    background: #f1f1f1;
    color: #111;
}
.small-btn {
    width: 17px;
    margin-right: 4px;
}
.skip-btn {
    width: 80px;
    margin-right: 2px;
}
.side-btn {
    width: 101px;
    margin-left: 2px;
}
.side-btn.dim {
    color: #606060;
}
.side-btn.last {
    margin-left: auto;
}
.run {
    display: flex;
    align-items: center;
    padding: 5px 5px 0 2px;
    margin-bottom: 1px;
}
.progress {
    flex: 1;
    height: 11px;
    border: 1px solid #a0a0a0;
    background: linear-gradient(#e0e0e0 4px, #c4c4c4 4px, #d0d0d0);
}
.progress div {
    height: 9px;
    background: linear-gradient(#b8f4b8 3px, #00c020 4px, #10dc28);
}
.stop-btn {
    height: 15px;
    font-weight: bold;
}

/* Status bar */
.statusbar {
    flex: 1;
    display: flex;
    align-items: center;
    background: #f0f0f0;
    border-bottom: 2px solid #b0b0b0;
}
.help {
    flex: 1;
    padding-left: 2px;
}
.cell {
    flex: none;
    width: 47px;
    padding-left: 3px;
    border-left: 1px solid #aaa;
    line-height: 11px;
    white-space: nowrap;
}
.cell.wide {
    width: 75px;
}
.cell.mid {
    width: 70px;
}
.cell.traffic {
    width: 107px;
    display: flex;
    align-items: center;
    gap: 23px;
}
.traffic svg {
    width: 17px;
    height: 9px;
}

/* Indicator properties */
.dialog {
    position: absolute;
    left: 239px;
    top: 202px;
    width: 302px;
    padding: 0 4px 4px;
    border: 1px solid #333;
    border-radius: 4px;
    background: linear-gradient(100deg, #9aa0a0 0, #7c8c84 30%, #202428 40%, #484e54 60%, #14181c 75%, #666 100%);
    box-shadow: inset 0 0 0 1px #b8bcc0;
    font-family: Lato, Arial, sans-serif;
}
.dialog-title {
    height: 17px;
    display: flex;
    justify-content: space-between;
    font-family: "DejaVu Sans Condensed", "Noto Sans", sans-serif;
    line-height: 16px;
    color: #000;
}
.dialog-buttons {
    display: flex;
}
.dialog-buttons button {
    width: 18px;
    height: 11px;
    border: 1px solid #ccc;
    border-top: 0;
    background: #5a6066;
    color: #fff;
    font-weight: bold;
    line-height: 9px;
}
.dialog-buttons .close {
    width: 30px;
    background: linear-gradient(#e08878, #c02818 50%, #d84830);
    font-size: 11px;
}
.dialog-body {
    padding: 4px 3px 4px;
    background: #f2f2f2;
    border: 1px solid #ddd;
}
.dialog-tabs {
    display: flex;
    align-items: flex-end;
    height: 14px;
}
.dialog-tabs button {
    height: 12px;
    padding: 0 4px;
    border: 1px solid #b0b0b0;
    border-bottom: 0;
    background: #ececec;
}
.dialog-tabs .active {
    height: 15px;
    padding: 0 4px 2px;
    margin-bottom: -1px;
    background: #fff;
}
.page {
    padding: 5px 6px 7px 7px;
    border: 1px solid #c4c4c4;
    background: #f8f8f8;
}
.inputs {
    display: flex;
    height: 103px;
    overflow: hidden;
    border: 1px solid #888;
    background: #fff;
}
.rows {
    flex: 1;
}
.inputs table {
    width: 100%;
    height: 111px;
    border-collapse: collapse;
    table-layout: fixed;
}
.inputs th {
    width: 50%;
    height: 16px;
    padding: 0 4px;
    font-weight: normal;
    text-align: left;
    background: #fafafa;
}
.inputs td {
    height: 13px;
    padding: 0 3px 0 2px;
    line-height: 11px;
    border-top: 1px solid #b8b8b8;
    white-space: nowrap;
}
.inputs tr:nth-child(even) td {
    background: #ebebeb;
}
.inputs td svg {
    display: inline-block;
    width: 11px;
    height: 10px;
    margin-right: 2px;
    vertical-align: middle;
}
.actions {
    display: flex;
    justify-content: flex-end;
    gap: 5px;
    margin-top: 5px;
}
.actions button {
    width: 49px;
    height: 15px;
    border: 1px solid #888;
    border-radius: 2px;
    background: linear-gradient(#f6f6f6 50%, #dedede 50%);
}
.actions .default {
    border: 2px solid #3aa8d8;
    background: #dcf0fa;
}
```
